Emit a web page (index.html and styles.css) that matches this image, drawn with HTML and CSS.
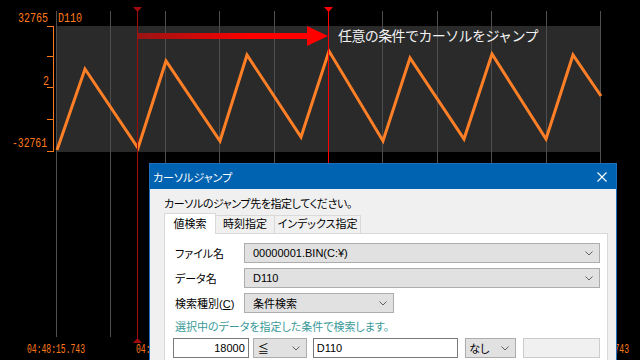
FILE: index.html
```html
<!DOCTYPE html>
<html lang="ja">
<head>
    <meta charset="UTF-8">
    <meta name="viewport" content="width=device-width, initial-scale=1.0">
    <title>カーソルジャンプ</title>
    <link rel="stylesheet" href="styles.css">
</head>
<body>
    <div class="screen">
        <!-- Waveform chart -->
        <svg class="chart" width="640" height="360" viewBox="0 0 640 360">
            <defs>
                <linearGradient id="arrowFill" gradientUnits="userSpaceOnUse" x1="137" y1="0" x2="328" y2="0">
                    <stop offset="0" stop-color="#9a1414"/>
                    <stop offset="0.6" stop-color="#ff0000"/>
                </linearGradient>
            </defs>

            <rect class="plot" x="56" y="26" width="545" height="126"/>

            <g class="grid">
                <line x1="56.5" y1="11" x2="56.5" y2="337"/>
                <line x1="110.5" y1="11" x2="110.5" y2="337"/>
                <line x1="165.5" y1="11" x2="165.5" y2="337"/>
                <line x1="219.5" y1="11" x2="219.5" y2="337"/>
                <line x1="274.5" y1="11" x2="274.5" y2="337"/>
                <line x1="328.5" y1="11" x2="328.5" y2="337"/>
                <line x1="382.5" y1="11" x2="382.5" y2="337"/>
                <line x1="437.5" y1="11" x2="437.5" y2="337"/>
                <line x1="491.5" y1="11" x2="491.5" y2="337"/>
                <line x1="546.5" y1="11" x2="546.5" y2="337"/>
                <line x1="600.5" y1="11" x2="600.5" y2="337"/>
            </g>

            <g class="axis">
                <line x1="53.5" y1="26" x2="53.5" y2="152"/>
                <line x1="47" y1="26.5" x2="54" y2="26.5"/>
                <line x1="47" y1="56.5" x2="54" y2="56.5"/>
                <line x1="47" y1="87.5" x2="54" y2="87.5"/>
                <line x1="47" y1="119.5" x2="54" y2="119.5"/>
                <line x1="47" y1="151.5" x2="54" y2="151.5"/>
            </g>

            <g class="labels">
                <text x="18" y="22" textLength="30" lengthAdjust="spacingAndGlyphs">32765</text>
                <text x="58" y="22" textLength="24" lengthAdjust="spacingAndGlyphs">D110</text>
                <text x="43" y="85" textLength="6" lengthAdjust="spacingAndGlyphs">2</text>
                <text x="12" y="147" textLength="35" lengthAdjust="spacingAndGlyphs">-32761</text>
                <text x="27" y="353" textLength="58" lengthAdjust="spacingAndGlyphs">04:48:15.743</text>
                <text x="136" y="353" textLength="58" lengthAdjust="spacingAndGlyphs">04:48:16.343</text>
                <text x="571" y="353" textLength="58" lengthAdjust="spacingAndGlyphs">04:48:18.743</text>
            </g>

            <polyline class="wave" points="57,150 85,69 138,148 166,61 220,141 247,55 301,137 329,51 383,141 410,58 464,139 492,54 546,139 573,55 601,96"/>

            <!-- cursors -->
            <line class="cursor-a" x1="137.5" y1="8" x2="137.5" y2="340"/>
            <polygon class="cursor-a-mark" points="133,7 142,7 137.5,12"/>
            <polygon class="cursor-a-mark" points="133,343 142,343 137.5,338"/>
            <line class="cursor-b" x1="328.5" y1="8" x2="328.5" y2="340"/>
            <polygon class="cursor-b-mark" points="324,7 333,7 328.5,12"/>

            <!-- jump arrow -->
            <rect class="arrow" x="137" y="33" width="172" height="6"/>
            <polygon class="arrow" points="307,26 328,36 307,46"/>
            <text class="note" x="338" y="41">任意の条件でカーソルをジャンプ</text>
        </svg>

        <!-- Cursor jump dialog -->
        <div class="dialog">
            <div class="titlebar">
                <span>カーソルジャンプ</span>
                <svg class="close" width="10" height="10" viewBox="0 0 10 10">
                    <path d="M0.5 0.5 L9.5 9.5 M9.5 0.5 L0.5 9.5"/>
                </svg>
            </div>
            <div class="dialog-body">
                <p class="prompt">カーソルのジャンプ先を指定してください。</p>
                <div class="tabs">
                    <div class="tab active">値検索</div>
                    <div class="tab tab-time">時刻指定</div>
                    <div class="tab tab-index">インデックス指定</div>
                </div>
                <div class="panel">
                    <div class="field">
                        <span class="label">ファイル名</span>
                        <div class="combo">
                            <span>00000001.BIN(C:¥)</span>
                            <svg class="chevron" width="8" height="5" viewBox="0 0 8 5"><polyline points="0.5,0.5 4,4 7.5,0.5"/></svg>
                        </div>
                    </div>
                    <div class="field">
                        <span class="label">データ名</span>
                        <div class="combo">
                            <span>D110</span>
                            <svg class="chevron" width="8" height="5" viewBox="0 0 8 5"><polyline points="0.5,0.5 4,4 7.5,0.5"/></svg>
                        </div>
                    </div>
                    <div class="field">
                        <span class="label">検索種別(<u>C</u>)</span>
                        <div class="combo combo-kind">
                            <span>条件検索</span>
                            <svg class="chevron" width="8" height="5" viewBox="0 0 8 5"><polyline points="0.5,0.5 4,4 7.5,0.5"/></svg>
                        </div>
                    </div>
                    <p class="hint">選択中のデータを指定した条件で検索します。</p>
                    <div class="cond-row">
                        <div class="textbox value">18000</div>
                        <div class="combo combo-op">
                            <span>≦</span>
                            <svg class="chevron" width="8" height="5" viewBox="0 0 8 5"><polyline points="0.5,0.5 4,4 7.5,0.5"/></svg>
                        </div>
                        <div class="textbox target">D110</div>
                        <div class="combo combo-none">
                            <span>なし</span>
                            <svg class="chevron" width="8" height="5" viewBox="0 0 8 5"><polyline points="0.5,0.5 4,4 7.5,0.5"/></svg>
                        </div>
                        <div class="textbox disabled"></div>
                    </div>
                </div>
            </div>
        </div>
    </div>
</body>
</html>
```

FILE: styles.css
```css
body {
    margin: 0;
    padding: 0;
    background-color: #000;
}

.screen {
    position: relative;
    width: 640px;
    height: 360px;
    overflow: hidden;
}

.chart {
    display: block;
}

/* chart */
.plot {
    fill: #2a2a2a;
}

.grid line {
    stroke: #4e4e4e;
    stroke-width: 1;
}

.axis line {
    stroke: #ff7a1a;
    stroke-width: 1;
}

.labels text {
    font-family: "Liberation Mono", monospace;
    font-size: 13px;
    fill: #ff7a1a;
}

.wave {
    fill: none;
    stroke: #ff7f27;
    stroke-width: 3;
    stroke-linejoin: miter;
}

.cursor-a {
    stroke: #a00c0c;
    stroke-width: 1;
}

.cursor-a-mark {
    fill: #a00c0c;
}

.cursor-b {
    stroke: #ff0000;
    stroke-width: 1;
}

.cursor-b-mark {
    fill: #ff0000;
}

.arrow {
    fill: url(#arrowFill);
}

.note {
    font-family: "Noto Sans CJK JP", sans-serif;
    font-size: 14px;
    letter-spacing: -0.6px;
    fill: #f2f2f2;
}

/* dialog */
.dialog {
    position: absolute;
    left: 149px;
    top: 163px;
    width: 466px;
    height: 210px;
    border: 1px solid #1f6fc0;
    background-color: #f0f0f0;
    font-family: "Liberation Sans", "Noto Sans CJK JP", sans-serif;
    font-size: 11px;
    font-feature-settings: "palt";
    color: #000;
}

.titlebar {
    display: flex;
    justify-content: space-between;
    align-items: center;
    height: 25px;
    padding: 0 9px 0 3px;
    background-color: #0063b1;
    color: #fff;
}

.close path {
    stroke: #fff;
    stroke-width: 1.1;
    fill: none;
}

.dialog-body {
    padding: 7px 8px 0 14px;
}

.prompt {
    margin: 0 0 1px;
    line-height: 16px;
    letter-spacing: -0.4px;
}

.tabs {
    display: flex;
    align-items: flex-end;
}

.tab {
    height: 17px;
    line-height: 17px;
    text-align: center;
    white-space: nowrap;
    border: 1px solid #d9d9d9;
    border-bottom: none;
    background-color: #f0f0f0;
    margin-left: -1px;
}

.tab.active {
    position: relative;
    width: 50px;
    height: 20px;
    line-height: 20px;
    margin-left: 0;
    margin-bottom: -1px;
    background-color: #fff;
}

.tab-time {
    width: 58px;
}

.tab-index {
    width: 85px;
}

.panel {
    height: 160px;
    padding: 9px 7px 0 10px;
    border: 1px solid #d9d9d9;
    background-color: #fff;
}

.field {
    display: grid;
    grid-template-columns: 69px 1fr;
    align-items: center;
    margin-bottom: 5px;
}

.combo {
    display: flex;
    justify-content: space-between;
    align-items: center;
    box-sizing: border-box;
    height: 20px;
    padding: 0 6px 0 8px;
    border: 1px solid #adadad;
    background-color: #e1e1e1;
}

.chevron polyline {
    fill: none;
    stroke: #606060;
    stroke-width: 1;
}

.combo-kind {
    width: 150px;
}

.hint {
    margin: 7px 0 4px;
    line-height: 14px;
    color: #3a9a98;
}

.cond-row {
    display: flex;
    margin-left: -2px;
}

.textbox {
    box-sizing: border-box;
    height: 20px;
    line-height: 18px;
    padding: 0 3px;
    border: 1px solid #7a7a7a;
    background-color: #fff;
}

.value {
    width: 76px;
    text-align: right;
}

.combo-op {
    width: 54px;
    margin-left: 4px;
    padding-left: 4px;
}

.target {
    width: 146px;
    margin-left: 6px;
}

.combo-none {
    width: 51px;
    margin-left: 7px;
    padding-left: 3px;
}

.disabled {
    width: 77px;
    margin-left: 7px;
    border-color: #cccccc;
    background-color: #f0f0f0;
}
```
